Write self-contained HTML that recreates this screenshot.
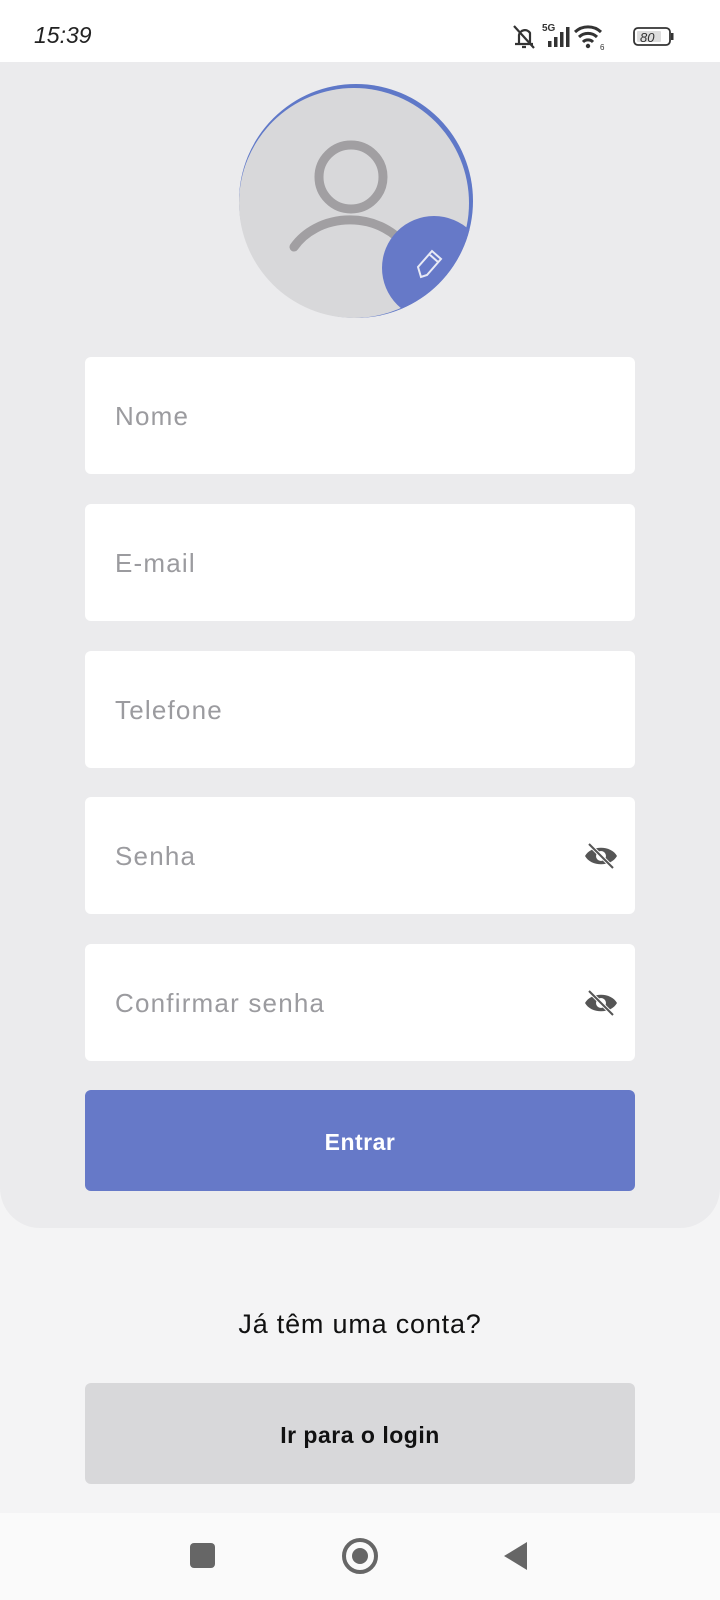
<!DOCTYPE html>
<html><head><meta charset="utf-8"><style>
*{margin:0;padding:0;box-sizing:border-box}
body{width:720px;height:1600px;background:#f4f4f5;font-family:"Liberation Sans",sans-serif;position:relative;overflow:hidden}
.sb{position:absolute;top:0;left:0;width:720px;height:62px;background:#fff}
.time{position:absolute;left:34px;top:22px;font-size:23px;font-style:italic;color:#222}
.card{position:absolute;top:62px;left:0;width:720px;height:1166px;background:#ebebed;border-radius:0 0 40px 40px}
.f{position:absolute;left:85px;width:550px;height:117px;background:#fff;border-radius:6px}
.f span{position:absolute;left:30px;top:44px;font-size:26px;color:#9b9b9f;letter-spacing:1.2px}
.eye{position:absolute;right:16px;top:44px}
.btn{position:absolute;left:85px;width:550px;border-radius:6px;text-align:center;font-weight:bold;font-size:23px;letter-spacing:0.5px}
.nav{position:absolute;top:1513px;left:0;width:720px;height:87px;background:#fafafa}
</style></head><body>
<div class="sb"><div class="time">15:39</div>
<svg style="position:absolute;left:512px;top:22px" width="170" height="30" viewBox="0 0 170 30">
<path d="M3 22h18M7 22V13a6 6 0 0 1 11 -2v11M2 4l20 22M10 25h4" stroke="#333" stroke-width="2.2" fill="none"/>
<text x="30" y="9" font-size="10" font-family="Liberation Sans" font-weight="bold" fill="#333">5G</text>
<rect x="36" y="19" width="3.5" height="6" fill="#333"/><rect x="42" y="15" width="3.5" height="10" fill="#333"/><rect x="48" y="10" width="3.5" height="15" fill="#333"/><rect x="54" y="5" width="3.5" height="20" fill="#333"/>
<path d="M63 10a19 19 0 0 1 26 0M67 15a13 13 0 0 1 18 0M71 20a7 7 0 0 1 10 0" stroke="#333" stroke-width="3" fill="none"/><circle cx="76" cy="24" r="2.2" fill="#333"/>
<text x="88" y="28" font-size="8" font-family="Liberation Sans" fill="#333">6</text>
<rect x="122" y="6" width="36" height="17" rx="4" stroke="#333" stroke-width="1.8" fill="#fff"/><rect x="125" y="9" width="24" height="11" rx="1" fill="#ddd"/><rect x="159" y="11" width="2.5" height="7" fill="#333"/>
<text x="128" y="20" font-size="13" font-style="italic" font-family="Liberation Sans" fill="#333">80</text>
</svg></div>
<div class="card">
<svg style="position:absolute;left:238px;top:20px" width="240" height="240" viewBox="0 0 240 240">
<defs><clipPath id="c"><circle cx="118" cy="119" r="117"/></clipPath></defs>
<circle cx="118" cy="119" r="117" fill="#5f78c8"/>
<circle cx="116" cy="121" r="115" fill="#d8d8da"/>
<circle cx="113" cy="95" r="32" stroke="#a19fa2" stroke-width="9" fill="none"/>
<path d="M56 165a65 55 0 0 1 112 0" stroke="#a19fa2" stroke-width="9" fill="none" stroke-linecap="round"/>
<circle cx="196" cy="186" r="52" fill="#6679c8" clip-path="url(#c)"/>
<path d="M183 195l-3 -10l14 -16l9 8l-14 16z M191 172l9 8" stroke="#e8eaf5" stroke-width="2" fill="none"/>
</svg>
</div>
<div class="f" style="top:357px"><span>Nome</span></div>
<div class="f" style="top:504px"><span>E-mail</span></div>
<div class="f" style="top:651px"><span>Telefone</span></div>
<div class="f" style="top:797px"><span>Senha</span>
<svg class="eye" width="36" height="30" viewBox="0 0 36 30"><path d="M2 15C8 4 28 4 34 15C28 26 8 26 2 15z" fill="#555"/><circle cx="18" cy="15" r="5" fill="#fff"/><path d="M6 3l24 24" stroke="#fff" stroke-width="4"/><path d="M6 3l24 24" stroke="#555" stroke-width="2"/></svg></div>
<div class="f" style="top:944px"><span>Confirmar senha</span>
<svg class="eye" width="36" height="30" viewBox="0 0 36 30"><path d="M2 15C8 4 28 4 34 15C28 26 8 26 2 15z" fill="#555"/><circle cx="18" cy="15" r="5" fill="#fff"/><path d="M6 3l24 24" stroke="#fff" stroke-width="4"/><path d="M6 3l24 24" stroke="#555" stroke-width="2"/></svg></div>
<div class="btn" style="top:1090px;height:101px;line-height:104px;background:#6679c8;color:#fff">Entrar</div>
<div style="position:absolute;top:1309px;width:720px;text-align:center;font-size:27px;color:#111;letter-spacing:0.8px">Já têm uma conta?</div>
<div class="btn" style="top:1383px;height:101px;line-height:104px;background:#d8d8da;color:#111">Ir para o login</div>
<div class="nav">
<div style="position:absolute;left:190px;top:30px;width:25px;height:25px;background:#666;border-radius:4px"></div>
<div style="position:absolute;left:342px;top:25px;width:36px;height:36px;border:4px solid #666;border-radius:50%"><div style="position:absolute;left:6px;top:6px;width:16px;height:16px;background:#666;border-radius:50%"></div></div>
<svg style="position:absolute;left:503px;top:28px" width="26" height="30"><path d="M24 1V29L1 15z" fill="#666"/></svg>
</div>
</body></html>
